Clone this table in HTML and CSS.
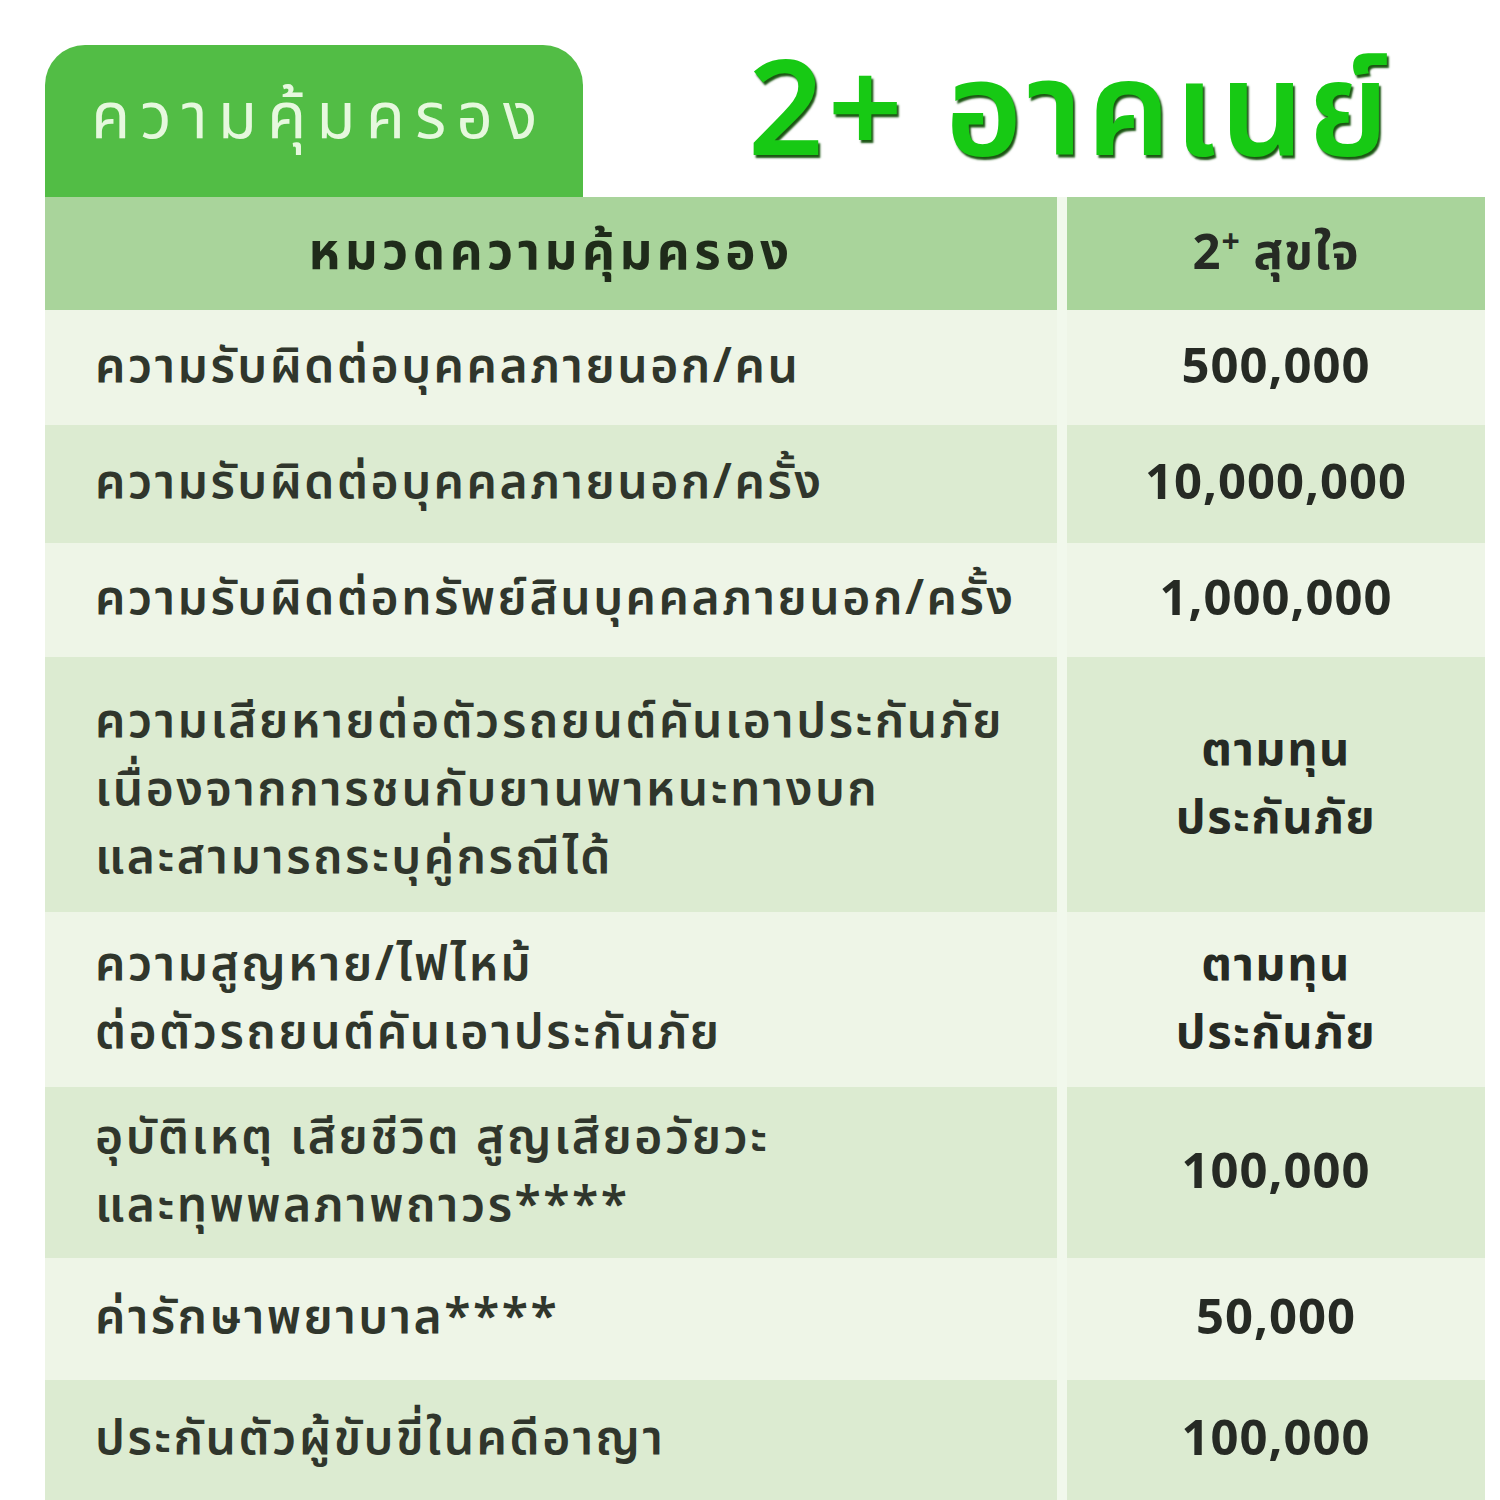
FILE: index.html
```html
<!DOCTYPE html>
<html lang="th">
<head>
<meta charset="utf-8">
<title>ความคุ้มครอง 2+ อาคเนย์</title>
<link rel="stylesheet" href="styles.css">
</head>
<body>
<div class="page">
  <div class="top">
    <div class="tab">ความคุ้มครอง</div>
    <h1 class="title">2+ อาคเนย์</h1>
  </div>
  <div class="table">
    <div class="cell head">หมวดความคุ้มครอง</div>
    <div class="cell head val"><span>2<sup>+</sup> สุขใจ</span></div>

    <div class="cell light h115">ความรับผิดต่อบุคคลภายนอก/คน</div>
    <div class="cell light val">500,000</div>

    <div class="cell dark h118">ความรับผิดต่อบุคคลภายนอก/ครั้ง</div>
    <div class="cell dark val">10,000,000</div>

    <div class="cell light h114">ความรับผิดต่อทรัพย์สินบุคคลภายนอก/ครั้ง</div>
    <div class="cell light val">1,000,000</div>

    <div class="cell dark h255 shift"><span>ความเสียหายต่อตัวรถยนต์คันเอาประกันภัย<br>เนื่องจากการชนกับยานพาหนะทางบก<br>และสามารถระบุคู่กรณีได้</span></div>
    <div class="cell dark val multi"><span>ตามทุน<br>ประกันภัย</span></div>

    <div class="cell light h175"><span>ความสูญหาย/ไฟไหม้<br>ต่อตัวรถยนต์คันเอาประกันภัย</span></div>
    <div class="cell light val multi"><span>ตามทุน<br>ประกันภัย</span></div>

    <div class="cell dark h171"><span>อุบัติเหตุ เสียชีวิต สูญเสียอวัยวะ<br>และทุพพลภาพถาวร****</span></div>
    <div class="cell dark val">100,000</div>

    <div class="cell light h122">ค่ารักษาพยาบาล****</div>
    <div class="cell light val">50,000</div>

    <div class="cell dark h120">ประกันตัวผู้ขับขี่ในคดีอาญา</div>
    <div class="cell dark val">100,000</div>
  </div>
</div>
</body>
</html>
```

FILE: styles.css
```css
html, body {
  margin: 0;
  padding: 0;
  background: #ffffff;
}

body {
  font-family: "Noto Sans Thai", "Loma", "Garuda", "Noto Sans", "DejaVu Sans", sans-serif;
  color: #2c3328;
}

.page {
  padding: 45px 15px 0 45px;
}

.top {
  display: flex;
  align-items: flex-end;
  height: 152px;
}

.tab {
  width: 538px;
  height: 152px;
  box-sizing: border-box;
  background: #52bd45;
  border-radius: 40px 40px 0 0;
  color: #e6f8de;
  font-size: 64px;
  font-weight: 400;
  letter-spacing: 10px;
  line-height: 148px;
  padding-left: 46px;
  white-space: nowrap;
}

.title {
  margin: 4px 0 0 165px;
  align-self: flex-start;
  font-family: "Noto Sans Thai", "Loma", "Liberation Sans", sans-serif;
  font-weight: 600;
  font-size: 132px;
  line-height: 1;
  color: #17c914;
  text-shadow: 2px 3px 2px #1b5613;
  letter-spacing: 4px;
  white-space: nowrap;
}

.table {
  display: grid;
  grid-template-columns: 1012px 418px;
  column-gap: 10px;
  background: #f1f8ec;
  width: 1440px;
}

.cell {
  display: flex;
  align-items: center;
  box-sizing: border-box;
  font-size: 48px;
  letter-spacing: 2.5px;
  line-height: 68px;
  padding-left: 50px;
  font-weight: 600;
  color: #30362c;
  white-space: nowrap;
}

.shift {
  padding-top: 12px;
}

.head {
  height: 113px;
  background: #a9d49b;
  justify-content: center;
  padding-left: 0;
  font-weight: 700;
  color: #1f2b1a;
  font-size: 51px;
  letter-spacing: 4.5px;
}

.head sup {
  font-size: 32px;
  line-height: 0;
  vertical-align: 16px;
  letter-spacing: 0;
}

.val {
  justify-content: center;
  text-align: center;
  padding-left: 0;
  font-weight: 700;
  color: #262a24;
  font-size: 49px;
  letter-spacing: 1px;
  line-height: 66px;
}

.multi {
  font-size: 47px;
  line-height: 68px;
  letter-spacing: 1.5px;
}

.light { background: #eef5e7; }
.dark { background: #dcebd1; }

.h115 { height: 115px; }
.h118 { height: 118px; }
.h114 { height: 114px; }
.h255 { height: 255px; }
.h175 { height: 175px; }
.h171 { height: 171px; }
.h122 { height: 122px; }
.h120 { height: 120px; }
```
